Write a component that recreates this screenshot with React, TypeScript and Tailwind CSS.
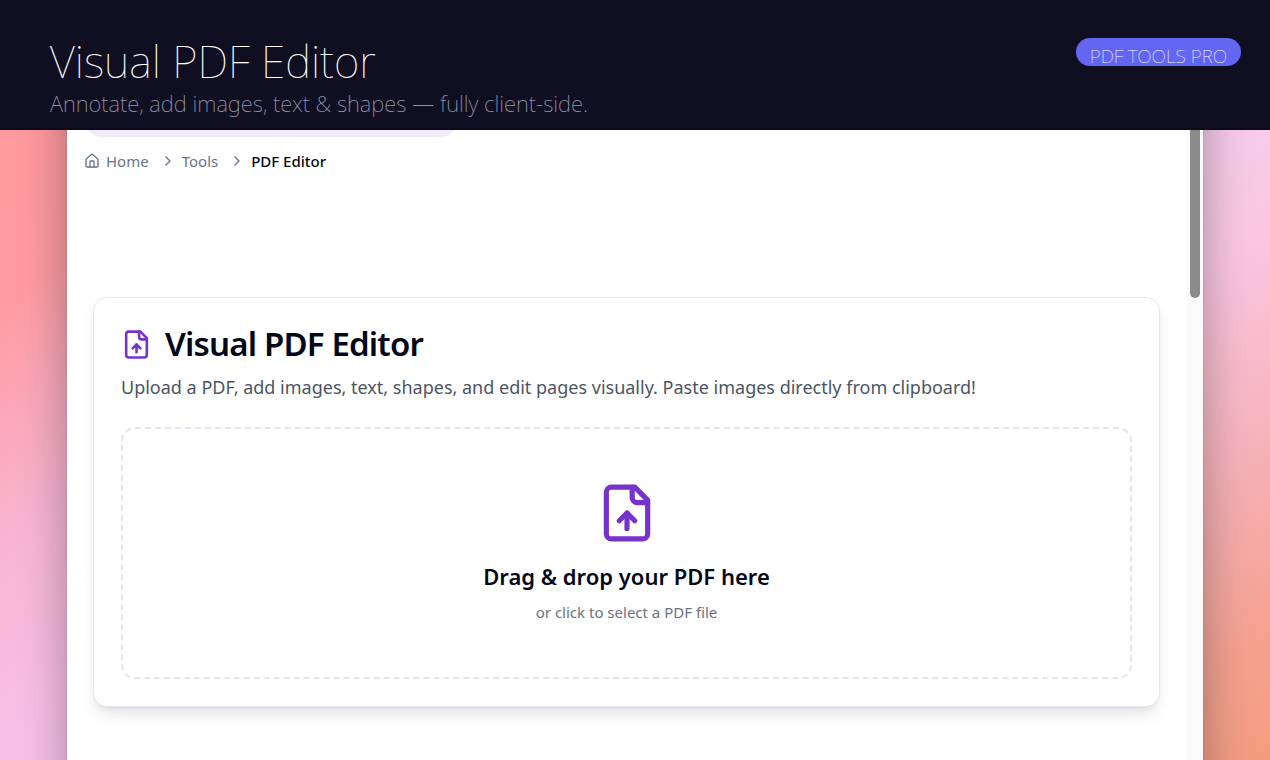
import { useState } from "react";
import type { ReactNode } from "react";
import { ChevronRight, House } from "lucide-react";

const FileUp = ({ className }: { className: string }) => (
    <svg
        viewBox="0 0 24 24"
        fill="none"
        stroke="currentColor"
        strokeWidth="2"
        strokeLinecap="round"
        strokeLinejoin="round"
        aria-hidden="true"
        className={className}
    >
        <path d="M15 2H6a2 2 0 0 0-2 2v16a2 2 0 0 0 2 2h12a2 2 0 0 0 2-2V7Z" />
        <path d="M14 2v4a2 2 0 0 0 2 2h4" />
        <path d="M12 12v6" />
        <path d="m15 15-3-3-3 3" />
    </svg>
);

const Header = () => (
    <header className="z-10 flex h-[130px] shrink-0 items-start justify-between border-b-2 border-[#0d081a] bg-[#100e21] pl-[50px] pr-[29px]">
        <div className="pt-[31px]">
            <h1 className="text-[44px] leading-[60px] font-thin text-white">Visual PDF Editor</h1>
            <p className="text-[22px] leading-6 font-extralight text-[#9496ab]">
                Annotate, add images, text &amp; shapes — fully client-side.
            </p>
        </div>
        <span className="mt-[38px] h-7 rounded-full bg-[#6366f1] px-[14px] text-[19px] leading-9 font-thin text-white">
            PDF TOOLS PRO
        </span>
    </header>
);

const Crumb = ({ children }: { children: ReactNode }) => (
    <li className="flex items-center gap-[11px]">
        <a href="#" className="flex items-center gap-1.5 text-[#64748b]">{children}</a>
        <ChevronRight className="size-4 text-[#64748b]" />
    </li>
);

const Breadcrumb = () => (
    <nav aria-label="Breadcrumb" className="mt-[13px] text-[15px] leading-[22px]">
        <ol className="flex items-center gap-1.5">
            <Crumb>
                <House className="size-4" />
                Home
            </Crumb>
            <Crumb>Tools</Crumb>
            <li className="font-medium text-[#020817]">PDF Editor</li>
        </ol>
    </nav>
);

const DropZone = () => {
    const [fileName, setFileName] = useState("");
    return (
        <label className="mt-7 flex cursor-pointer flex-col items-center rounded-[14px] border-2 border-dashed border-[#dfe6f0] px-6 pt-[53px] pb-[54px] text-center">
            <FileUp className="size-[62px] text-[#7633cc]" />
            <span className="mt-4 text-[22px] leading-8 font-semibold text-[#020817]">
                {fileName || "Drag & drop your PDF here"}
            </span>
            <span className="mt-[9px] text-[15px] leading-[22px] text-[#6b7280]">or click to select a PDF file</span>
            <input
                type="file"
                accept="application/pdf"
                className="sr-only"
                onChange={(e) => setFileName(e.target.files?.[0]?.name ?? "")}
            />
        </label>
    );
};

const EditorCard = () => (
    <section className="mx-[9px] mt-[125px] rounded-[14px] border border-[#e2e8f0] bg-white px-[27px] pt-[23px] pb-[27px] shadow-[0_10px_15px_-3px_rgba(0,0,0,0.1),0_4px_6px_-4px_rgba(0,0,0,0.1)]">
        <div className="flex items-center gap-[13px]">
            <FileUp className="size-[31px] text-[#7633cc]" />
            <h2 className="text-[33px] leading-[46px] font-semibold tracking-tight text-[#020817]">
                Visual PDF Editor
            </h2>
        </div>
        <p className="mt-2 text-[18px] leading-6 text-[#4b5563]">
            Upload a PDF, add images, text, shapes, and edit pages visually. Paste images directly from clipboard!
        </p>
        <DropZone />
    </section>
);

const App = () => (
    <div className="flex h-screen flex-col overflow-hidden font-['Noto_Sans',sans-serif]">
        <Header />
        <main className="flex min-h-0 flex-1 overflow-hidden bg-[linear-gradient(135deg,#ff9a9e_0%,#ff9ca2_10%,#fba9ba_16%,#f8b6d4_23%,#f8c0e8_33%,#fad0f4_50%,#f8cbe8_67%,#fbc8e4_71%,#f6b0b4_84%,#f5a392_92%,#f49c7e_100%)] px-[66px]">
            <div className="-my-20 flex min-w-0 flex-1 border-x border-black/5 bg-white bg-clip-padding pt-20 shadow-[0_0_45px_rgba(0,0,0,0.33)]">
                <div className="min-w-0 flex-1 pr-[18px] pl-[17px]">
                    <div className="-mt-[29px] h-9 w-[374px] max-w-full rounded-full bg-[#f1eafa]" />
                    <Breadcrumb />
                    <EditorCard />
                </div>
                <div className="w-4 shrink-0 bg-[#fafafa] px-[3px]">
                    <div className="h-[168px] rounded-b-full bg-[#8b8b8b]" />
                </div>
            </div>
        </main>
    </div>
);

export default App;
